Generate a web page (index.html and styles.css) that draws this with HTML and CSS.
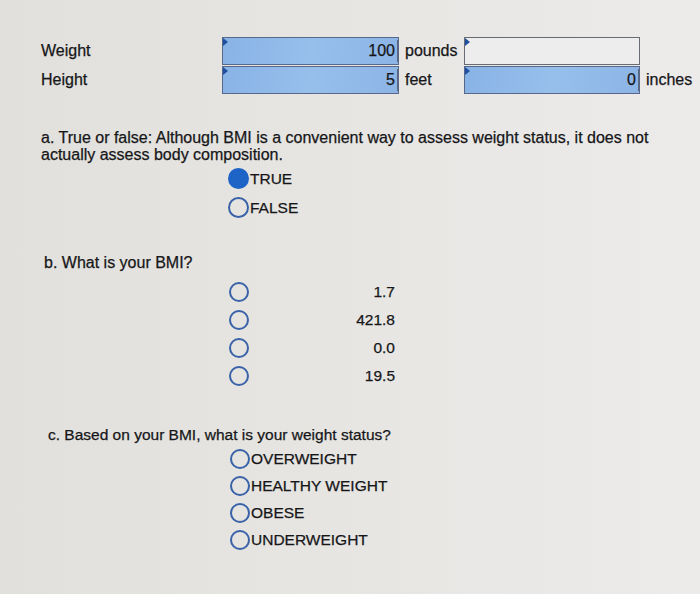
FILE: index.html
```html
<!DOCTYPE html>
<html>
<head>
<meta charset="utf-8">
<link rel="stylesheet" href="styles.css">
</head>
<body>
<div class="page">
  <div class="measure">
    <div class="label">Weight</div>
    <div class="field filled"><span class="val">100</span></div>
    <div class="unit">pounds</div>
    <div class="field empty"></div>
    <div class="unit"></div>

    <div class="label">Height</div>
    <div class="field filled"><span class="val">5</span></div>
    <div class="unit">feet</div>
    <div class="field filled"><span class="val">0</span></div>
    <div class="unit">inches</div>
  </div>

  <div class="q q-a">
    <p class="prompt">a. True or false: Although BMI is a convenient way to assess weight status, it does not actually assess body composition.</p>
    <div class="opts opts-a">
      <div class="opt"><span class="radio checked"></span><span>TRUE</span></div>
      <div class="opt"><span class="radio"></span><span>FALSE</span></div>
    </div>
  </div>

  <div class="q q-b">
    <p class="prompt">b. What is your BMI?</p>
    <div class="opts opts-b">
      <div class="opt-b"><span class="radio small"></span><span class="num">1.7</span></div>
      <div class="opt-b"><span class="radio small"></span><span class="num">421.8</span></div>
      <div class="opt-b"><span class="radio small"></span><span class="num">0.0</span></div>
      <div class="opt-b"><span class="radio small"></span><span class="num">19.5</span></div>
    </div>
  </div>

  <div class="q q-c">
    <p class="prompt">c. Based on your BMI, what is your weight status?</p>
    <div class="opts opts-c">
      <div class="opt"><span class="radio"></span><span>OVERWEIGHT</span></div>
      <div class="opt"><span class="radio"></span><span>HEALTHY WEIGHT</span></div>
      <div class="opt"><span class="radio"></span><span>OBESE</span></div>
      <div class="opt"><span class="radio"></span><span>UNDERWEIGHT</span></div>
    </div>
  </div>
</div>
</body>
</html>
```
FILE: styles.css
```css
html, body {
  margin: 0;
  padding: 0;
}
body {
  width: 700px;
  height: 594px;
  overflow: hidden;
  background: linear-gradient(90deg, #e1e0dc 0%, #e6e5e2 45%, #ecebea 100%);
  font-family: "Liberation Sans", Arial, sans-serif;
  font-size: 15.5px;
  color: #161618;
  -webkit-text-stroke: 0.25px #161618;
}
.page {
  padding: 37px 0 0 41px;
}
.measure {
  display: grid;
  grid-template-columns: 181px 177px 65px 176px auto;
  grid-template-rows: 28px 28px;
  row-gap: 1px;
  align-items: center;
}
.label {
  font-size: 16px;
}
.field {
  position: relative;
  box-sizing: border-box;
  height: 28px;
  border: 1px solid #58688a;
  display: flex;
  justify-content: flex-end;
  align-items: center;
}
.field::before {
  content: "";
  position: absolute;
  left: 0;
  top: 0;
  border-top: 4px solid transparent;
  border-bottom: 4px solid transparent;
  border-left: 5px solid #1f4fa0;
}
.filled {
  background: linear-gradient(100deg, #88b3e5 0%, #97bfec 50%, #8cb5e6 100%);
}
.empty {
  background: #ededed;
  border-color: #666b74;
}
.val {
  font-size: 16px;
  padding-right: 2px;
  border-right: 1px solid #5a6780;
  line-height: 22px;
}
.unit {
  font-size: 16px;
  padding-left: 6px;
}
.prompt {
  margin: 0;
  line-height: 17px;
  font-size: 16px;
}
.q-a {
  margin-top: 35px;
  width: 650px;
}
.opts-a {
  margin: 1px 0 0 187px;
}
.opt {
  display: flex;
  align-items: center;
  height: 29px;
}
.radio {
  box-sizing: border-box;
  width: 21px;
  height: 21px;
  border: 2.5px solid #3a62a8;
  border-radius: 50%;
  flex: none;
  margin-right: 1px;
}
.radio.checked {
  background: #1e63c6;
  border-color: #1e63c6;
}
.q-b {
  margin: 32px 0 0 3px;
}
.opts-b {
  margin: 7px 0 0 185px;
}
.opt-b {
  display: grid;
  grid-template-columns: 20px 146px;
  align-items: center;
  height: 28px;
}
.radio.small {
  width: 20px;
  height: 20px;
}
.num {
  text-align: right;
}
.q-c {
  margin: 36px 0 0 7px;
}
.q-c .prompt {
  font-size: 15.5px;
}
.opts-c {
  margin: 2px 0 0 182px;
}
.opts-c .opt {
  height: 27px;
}
.opts-c .radio {
  width: 20px;
  height: 20px;
}
```
